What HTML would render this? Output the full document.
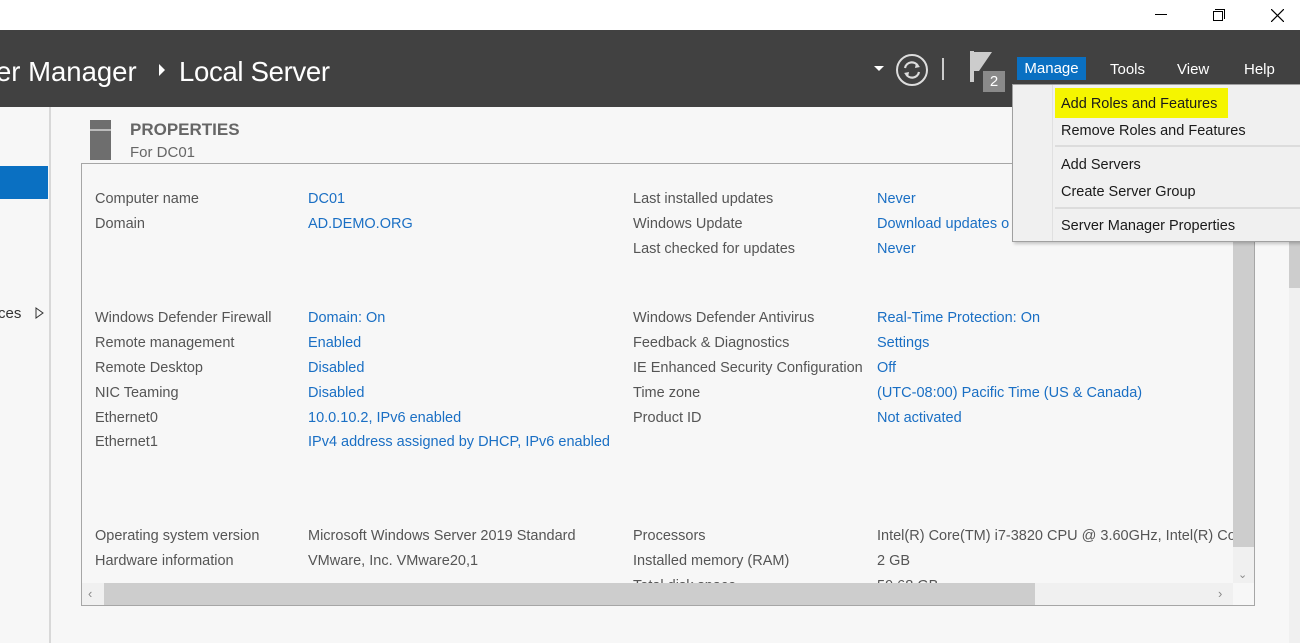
<!DOCTYPE html><html><head><style>
*{margin:0;padding:0;box-sizing:border-box}
body{width:1300px;height:643px;overflow:hidden;background:#f7f7f7;font-family:"Liberation Sans",sans-serif;font-size:14.5px;position:relative}
.a{position:absolute;white-space:nowrap;line-height:18px}
.l{color:#555}.v{color:#1a6fc4}.g{color:#555}
.m{color:#1a1a1a;font-size:14.5px}
</style></head><body>
<div class="a" style="left:0;top:0;width:1300px;height:30px;background:#fff"></div>
<div class="a" style="left:1155px;top:14px;width:12px;height:1px;background:#000"></div>
<div class="a" style="left:1213px;top:11px;width:10px;height:10px;border:1px solid #000;background:#fff"></div>
<div class="a" style="left:1215px;top:9px;width:10px;height:10px;border-top:1px solid #000;border-right:1px solid #000"></div>
<svg class="a" style="left:1271px;top:9px" width="13" height="13"><path d="M0 0L13 13M13 0L0 13" stroke="#000" stroke-width="1.2"/></svg>
<div class="a" style="left:0;top:30px;width:1300px;height:77px;background:#414141"></div>
<div class="a" style="left:-4px;top:55px;color:#fff;font-size:27.5px;line-height:34px">er Manager</div>
<svg class="a" style="left:158px;top:64px" width="8" height="12"><path d="M1 0L7 6L1 12Z" fill="#fff"/></svg>
<div class="a" style="left:179px;top:55px;color:#fff;font-size:27.5px;line-height:34px;letter-spacing:-0.3px">Local Server</div>
<svg class="a" style="left:874px;top:66px" width="10" height="6"><path d="M0 0H10L5 5Z" fill="#fff"/></svg>
<svg class="a" style="left:894px;top:52px" width="36" height="36"><circle cx="18" cy="18" r="15" fill="none" stroke="#ddd" stroke-width="2"/><path d="M11 16A7 7 0 0 1 24 14M25 20A7 7 0 0 1 12 22" fill="none" stroke="#ddd" stroke-width="2.2"/><path d="M22 11L26 15L21 16Z M14 25L10 21L15 20Z" fill="#ddd"/></svg>
<div class="a" style="left:942px;top:58px;width:2px;height:22px;background:#ccc"></div>
<svg class="a" style="left:970px;top:51px" width="24" height="32"><path d="M0 0H4V31H0Z M4 1H22L9 20H4Z" fill="#ccc"/></svg>
<div class="a" style="left:983px;top:71px;width:22px;height:21px;background:#8a8a8a;color:#fff;font-size:15px;line-height:21px;text-align:center">2</div>
<div class="a" style="left:1017px;top:57px;width:69px;height:23px;background:#0a70c2;color:#fff;font-size:15px;line-height:23px;text-align:center">Manage</div>
<div class="a" style="left:1110px;top:61px;color:#fff;font-size:15px">Tools</div>
<div class="a" style="left:1177px;top:61px;color:#fff;font-size:15px">View</div>
<div class="a" style="left:1244px;top:61px;color:#fff;font-size:15px">Help</div>
<div class="a" style="left:49px;top:107px;width:2px;height:536px;background:#d8d8d8"></div>
<div class="a" style="left:0;top:166px;width:48px;height:33px;background:#0a70c2"></div>
<div class="a" style="left:-2px;top:305px;color:#333;font-size:15px">ces</div>
<svg class="a" style="left:35px;top:307px" width="9" height="12"><path d="M1 1L8 6L1 11Z" fill="none" stroke="#333"/></svg>
<div class="a" style="left:90px;top:120px;width:21px;height:40px;background:#6e6e6e"></div>
<div class="a" style="left:90px;top:129px;width:21px;height:2px;background:#bbb"></div>
<div class="a" style="left:130px;top:121px;color:#666;font-size:17px;font-weight:bold">PROPERTIES</div>
<div class="a" style="left:130px;top:144px;color:#666;font-size:15px">For DC01</div>
<div class="a" style="left:81px;top:163px;width:1174px;height:443px;border:1px solid #a6a6a6;background:#f7f7f7"></div>
<div class="a" style="left:1233px;top:164px;width:21px;height:419px;background:#f0f0f0"></div>
<div class="a" style="left:1233px;top:164px;width:21px;height:383px;background:#cdcdcd"></div>
<div class="a" style="left:1238px;top:566px;color:#888;font-size:11px">&#8964;</div>
<div class="a" style="left:82px;top:583px;width:1151px;height:22px;background:#f0f0f0"></div>
<div class="a" style="left:104px;top:583px;width:931px;height:22px;background:#cdcdcd"></div>
<div class="a" style="left:88px;top:585px;color:#888;font-size:13px">&#8249;</div>
<div class="a" style="left:1218px;top:585px;color:#888;font-size:13px">&#8250;</div>
<div class="a" style="left:1289px;top:241px;width:11px;height:402px;background:#f0f0f0"></div>
<div class="a" style="left:1289px;top:241px;width:11px;height:47px;background:#cdcdcd"></div>

<div class="a l" style="left:95px;top:190px">Computer name</div><div class="a v" style="left:308px;top:190px">DC01</div>
<div class="a l" style="left:95px;top:215px">Domain</div><div class="a v" style="left:308px;top:215px">AD.DEMO.ORG</div>
<div class="a l" style="left:633px;top:190px">Last installed updates</div><div class="a v" style="left:877px;top:190px">Never</div>
<div class="a l" style="left:633px;top:215px">Windows Update</div><div class="a v" style="left:877px;top:215px">Download updates o</div>
<div class="a l" style="left:633px;top:240px">Last checked for updates</div><div class="a v" style="left:877px;top:240px">Never</div>

<div class="a l" style="left:95px;top:309px">Windows Defender Firewall</div><div class="a v" style="left:308px;top:309px">Domain: On</div>
<div class="a l" style="left:95px;top:334px">Remote management</div><div class="a v" style="left:308px;top:334px">Enabled</div>
<div class="a l" style="left:95px;top:359px">Remote Desktop</div><div class="a v" style="left:308px;top:359px">Disabled</div>
<div class="a l" style="left:95px;top:384px">NIC Teaming</div><div class="a v" style="left:308px;top:384px">Disabled</div>
<div class="a l" style="left:95px;top:409px">Ethernet0</div><div class="a v" style="left:308px;top:409px">10.0.10.2, IPv6 enabled</div>
<div class="a l" style="left:95px;top:433px">Ethernet1</div><div class="a v" style="left:308px;top:433px">IPv4 address assigned by DHCP, IPv6 enabled</div>
<div class="a l" style="left:633px;top:309px">Windows Defender Antivirus</div><div class="a v" style="left:877px;top:309px">Real-Time Protection: On</div>
<div class="a l" style="left:633px;top:334px">Feedback &amp; Diagnostics</div><div class="a v" style="left:877px;top:334px">Settings</div>
<div class="a l" style="left:633px;top:359px">IE Enhanced Security Configuration</div><div class="a v" style="left:877px;top:359px">Off</div>
<div class="a l" style="left:633px;top:384px">Time zone</div><div class="a v" style="left:877px;top:384px">(UTC-08:00) Pacific Time (US &amp; Canada)</div>
<div class="a l" style="left:633px;top:409px">Product ID</div><div class="a v" style="left:877px;top:409px">Not activated</div>

<div class="a l" style="left:95px;top:527px">Operating system version</div><div class="a g" style="left:308px;top:527px">Microsoft Windows Server 2019 Standard</div>
<div class="a l" style="left:95px;top:552px">Hardware information</div><div class="a g" style="left:308px;top:552px">VMware, Inc. VMware20,1</div>
<div class="a l" style="left:633px;top:527px">Processors</div><div class="a g" style="left:877px;top:527px;width:356px;overflow:hidden">Intel(R) Core(TM) i7-3820 CPU @ 3.60GHz, Intel(R) Core</div>
<div class="a l" style="left:633px;top:552px">Installed memory (RAM)</div><div class="a g" style="left:877px;top:552px">2 GB</div>
<div class="a" style="left:633px;top:577px;height:6px;overflow:hidden;color:#555;width:600px">Total disk space<span style="position:absolute;left:244px">59.68 GB</span></div>

<div class="a" style="left:1012px;top:84px;width:290px;height:158px;background:#f0f0f0;border:1px solid #a0a0a0;box-shadow:2px 2px 3px rgba(0,0,0,.2)"></div>
<div class="a" style="left:1052px;top:85px;width:1px;height:156px;background:#e0e0e0"></div>
<div class="a" style="left:1055px;top:88px;width:173px;height:30px;background:#f5f500"></div>
<div class="a m" style="left:1061px;top:95px">Add Roles and Features</div>
<div class="a m" style="left:1061px;top:122px">Remove Roles and Features</div>
<div class="a" style="left:1055px;top:145px;width:245px;height:2px;background:#dcdcdc"></div>
<div class="a m" style="left:1061px;top:156px">Add Servers</div>
<div class="a m" style="left:1061px;top:183px">Create Server Group</div>
<div class="a" style="left:1055px;top:207px;width:245px;height:2px;background:#dcdcdc"></div>
<div class="a m" style="left:1061px;top:217px">Server Manager Properties</div>
</body></html>
